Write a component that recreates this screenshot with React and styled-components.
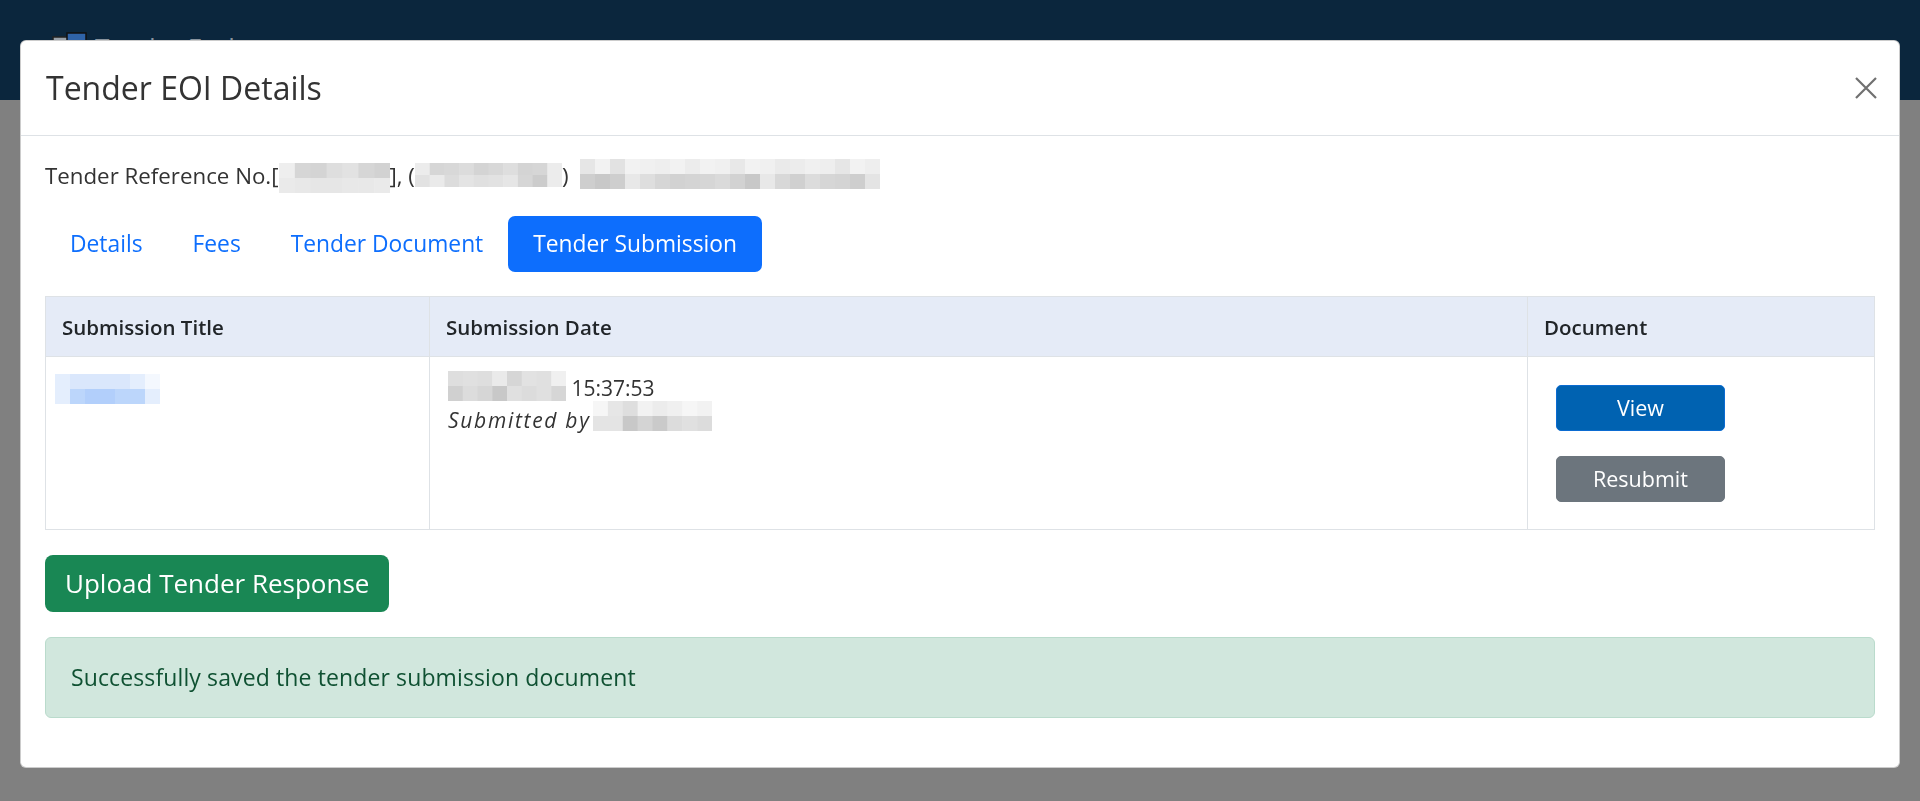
import React from "react";
import styled, { createGlobalStyle } from "styled-components";

const GlobalStyle = createGlobalStyle`
  html, body { margin: 0; padding: 0; }
  body {
    font-family: "Open Sans", "DejaVu Sans", sans-serif;
    background: #808080;
    overflow: hidden;
  }
  * { box-sizing: border-box; }
`;

const Page = styled.div`
  height: 801px;
  display: flex;
  flex-direction: column;
`;

const Navbar = styled.header`
  height: 100px;
  flex: none;
  background: #0b263d;
  display: flex;
  align-items: flex-start;
  padding: 32px 0 0 52px;
`;

const Brand = styled.div`
  display: flex;
  align-items: flex-start;
  gap: 7px;
  color: #8a949e;
  font-size: 26px;
  line-height: 30px;
  font-weight: 500;
`;

const Backdrop = styled.div`
  flex: 1;
  background: #808080;
`;

const Overlay = styled.div`
  position: fixed;
  inset: 0;
  padding: 40px 20px 0;
  display: flex;
  justify-content: center;
  align-items: flex-start;
`;

const Dialog = styled.div`
  width: 100%;
  background: #fff;
  border: 1px solid rgba(0, 0, 0, 0.2);
  border-radius: 6px;
  display: flex;
  flex-direction: column;
`;

const Header = styled.div`
  height: 95px;
  padding: 0 22px 0 25px;
  border-bottom: 1px solid #dee2e6;
  display: flex;
  align-items: center;
  justify-content: space-between;
`;

const Title = styled.h5`
  margin: 0;
  font-size: 32px;
  font-weight: 500;
  color: #333;
  line-height: 40px;
`;

const CloseButton = styled.button`
  border: 0;
  background: none;
  padding: 0;
  width: 22px;
  height: 22px;
  display: flex;
  cursor: pointer;
`;

const Body = styled.div`
  padding: 23px 24px 49px;
  display: flex;
  flex-direction: column;
  align-items: stretch;
`;

const RefLine = styled.div`
  font-size: 22.3px;
  line-height: 31px;
  color: #333;
  height: 31px;
  white-space: nowrap;
`;

const Mosaic = styled.svg`
  display: inline-block;
  vertical-align: ${(p) => p.$va || "middle"};
  margin-left: ${(p) => p.$ml || "0"};
  margin-right: ${(p) => p.$mr || "0"};
`;

const Tabs = styled.nav`
  margin-top: 26px;
  display: flex;
  height: 56px;
`;

const Tab = styled.a`
  display: block;
  padding: 12px 25px;
  font-size: 22.8px;
  line-height: 32px;
  border-radius: 7px;
  text-decoration: none;
  cursor: pointer;
  color: ${(p) => (p.$active ? "#fff" : "#0d6efd")};
  background: ${(p) => (p.$active ? "#0d6efd" : "transparent")};
`;

const Table = styled.table`
  margin-top: 24px;
  width: 100%;
  border-collapse: collapse;
  table-layout: fixed;
  border: 1px solid #dee2e6;
`;

const Th = styled.th`
  background: #e5ebf7;
  border: 1px solid #dee2e6;
  text-align: left;
  font-size: 20.5px;
  font-weight: 600;
  color: #212529;
  height: 60px;
  padding: 0 16px;
  line-height: 28px;
`;

const Td = styled.td`
  border: 1px solid #dee2e6;
  vertical-align: top;
  padding: ${(p) => p.$pad || "15px 16px"};
  font-size: 21px;
  line-height: 30px;
  color: #333;
`;

const CellLine = styled.div`
  white-space: nowrap;
  height: ${(p) => p.$h || "30px"};
`;

const Italic = styled.span`
  font-style: italic;
  letter-spacing: 1.7px;
`;

const ButtonStack = styled.div`
  display: flex;
  flex-direction: column;
  align-items: flex-start;
  gap: 25px;
`;

const SmallButton = styled.button`
  width: 169px;
  height: 46px;
  border-radius: 5px;
  font-family: inherit;
  font-size: 21.5px;
  line-height: 30px;
  color: #fff;
  cursor: pointer;
  border: 1px solid ${(p) => (p.$variant === "primary" ? "#0b6bd1" : "#6c757d")};
  background: ${(p) => (p.$variant === "primary" ? "#0062b1" : "#6c757d")};
`;

const UploadButton = styled.button`
  margin-top: 25px;
  align-self: flex-start;
  height: 57px;
  padding: 0 20px;
  border: 0;
  border-radius: 8px;
  background: #198754;
  color: #fff;
  font-family: inherit;
  font-size: 26px;
  line-height: 37px;
  cursor: pointer;
`;

const Alert = styled.div`
  margin-top: 25px;
  padding: 24px 25px;
  border: 1px solid #badbcc;
  border-radius: 6px;
  background: #d1e7dd;
  color: #0f5132;
  font-size: 23px;
  letter-spacing: 0.12px;
  line-height: 31px;
`;

const gray = (v) => `rgb(${v},${v},${v})`;

function Pixels({ rows, w, h, toColor = gray, ...rest }) {
  const cols = rows[0].length;
  const cw = w / cols;
  const rh = h / rows.length;
  return (
    <Mosaic width={w} height={h} viewBox={`0 0 ${w} ${h}`} {...rest}>
      {rows.map((row, ri) =>
        row.map((c, ci) => (
          <rect
            key={`${ri}-${ci}`}
            x={ci * cw}
            y={ri * rh}
            width={cw + 0.5}
            height={rh + 0.5}
            fill={toColor(c)}
          />
        ))
      )}
    </Mosaic>
  );
}

const refA = [
  [238, 214, 212, 222, 226, 214, 210],
  [234, 232, 230, 230, 232, 232, 234],
];
const refB = [
  [236, 214, 216, 220, 212, 216, 222, 212, 214, 236],
  [226, 234, 220, 228, 224, 226, 230, 214, 204, 236],
];
const refC = [
  [230, 242, 226, 242, 240, 238, 242, 236, 242, 240, 232, 242, 240, 234, 236, 240, 238, 230, 242, 238],
  [206, 200, 206, 232, 222, 214, 210, 212, 214, 218, 210, 200, 232, 216, 208, 220, 214, 212, 206, 228],
];
const dateA = [
  [222, 224, 222, 234, 214, 226, 224, 240],
  [208, 220, 214, 200, 224, 220, 224, 214],
];
const byA = [
  [246, 230, 222, 242, 236, 240, 246, 242],
  [228, 228, 200, 212, 202, 220, 224, 220],
];
const blue = ["#f4f8fe", "#e4eefd", "#dae7fc", "#bcd6fb", "#b2cffb"];
const linkA = [
  [1, 2, 2, 2, 2, 1, 0],
  [1, 3, 4, 4, 3, 3, 1],
];

function BrandIcon() {
  return (
    <svg width="36" height="30" viewBox="0 0 36 30">
      <rect x="1" y="5" width="20" height="24" fill="#9aa2aa" stroke="#222" strokeWidth="1.5" />
      <rect x="15" y="1" width="19" height="24" fill="#2f63a8" stroke="#111" strokeWidth="1.5" />
      <rect x="9" y="8" width="12" height="8" fill="#c9ced3" />
    </svg>
  );
}

export default function App() {
  return (
    <>
      <GlobalStyle />
      <Page>
        <Navbar>
          <Brand>
            <BrandIcon />
            <span>Tender Exchange</span>
          </Brand>
        </Navbar>
        <Backdrop />
      </Page>
      <Overlay>
        <Dialog role="dialog">
          <Header>
            <Title>Tender EOI Details</Title>
            <CloseButton aria-label="Close">
              <svg width="22" height="22" viewBox="0 0 22 22">
                <path d="M1 1 L21 21 M21 1 L1 21" stroke="#707070" strokeWidth="2.2" fill="none" />
              </svg>
            </CloseButton>
          </Header>
          <Body>
            <RefLine>
              Tender Reference No.[
              <Pixels rows={refA} w={111} h={30} $va="-9px" />
              ], (
              <Pixels rows={refB} w={147} h={24} $va="-3px" />
              ) <Pixels rows={refC} w={300} h={30} $va="-5px" $ml="6px" />
            </RefLine>
            <Tabs>
              <Tab>Details</Tab>
              <Tab>Fees</Tab>
              <Tab>Tender Document</Tab>
              <Tab $active>Tender Submission</Tab>
            </Tabs>
            <Table>
              <colgroup>
                <col style={{ width: "384px" }} />
                <col style={{ width: "1098px" }} />
                <col />
              </colgroup>
              <thead>
                <tr>
                  <Th>Submission Title</Th>
                  <Th>Submission Date</Th>
                  <Th>Document</Th>
                </tr>
              </thead>
              <tbody>
                <tr>
                  <Td>
                    <Pixels
                      rows={linkA}
                      w={105}
                      h={30}
                      toColor={(i) => blue[i]}
                      $ml="-7px"
                    />
                  </Td>
                  <Td $pad="14px 18px">
                    <CellLine>
                      <Pixels rows={dateA} w={118} h={30} $va="-5px" /> 15:37:53
                    </CellLine>
                    <CellLine>
                      <Italic>Submitted by</Italic>
                      <Pixels rows={byA} w={119} h={30} $va="-3px" $ml="2px" />
                    </CellLine>
                  </Td>
                  <Td $pad="28px 28px 27px">
                    <ButtonStack>
                      <SmallButton $variant="primary">View</SmallButton>
                      <SmallButton $variant="secondary">Resubmit</SmallButton>
                    </ButtonStack>
                  </Td>
                </tr>
              </tbody>
            </Table>
            <UploadButton>Upload Tender Response</UploadButton>
            <Alert>Successfully saved the tender submission document</Alert>
          </Body>
        </Dialog>
      </Overlay>
    </>
  );
}
